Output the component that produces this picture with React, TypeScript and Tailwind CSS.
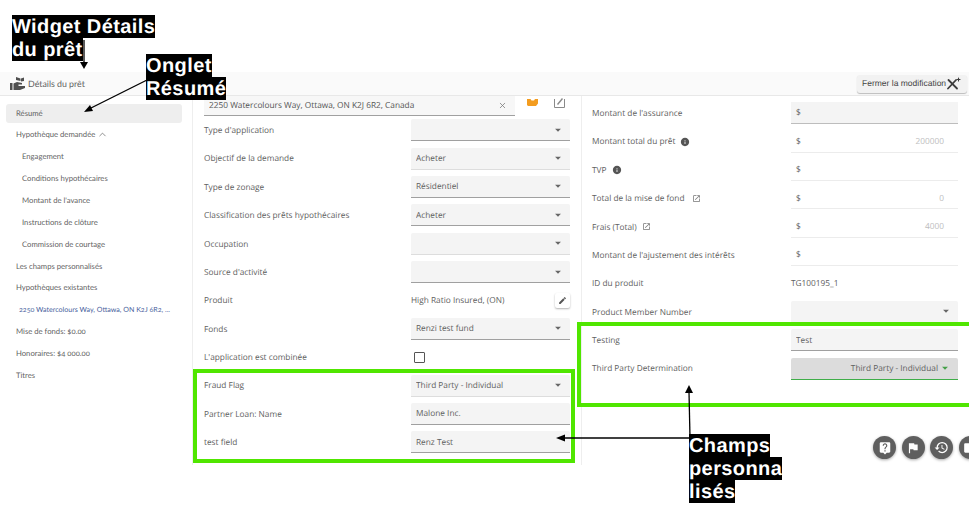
import React from 'react';
import { ChevronUp, X } from 'lucide-react';
import { MdArrowDropDown, MdEdit, MdFlag, MdHistory, MdInfo, MdLiveHelp, MdNote, MdOpenInNew } from 'react-icons/md';

type FieldKind = 'select' | 'text' | 'money' | 'plain';

// Grey filled input, with the caret when it is a select
const Field: React.FC<{ value?: string; kind?: FieldKind; faded?: boolean; width: string }> = ({ value, kind = 'text', faded, width }) => (
  <div
    className={`${width} h-[22px] shrink-0 flex items-center pl-[5px] pr-[6px] text-[8.3px] text-[#616161] rounded-t-[2px] bg-[#f4f4f4] border-b ${
      faded ? 'border-[#dddddd]' : 'border-[#a0a0a0]'
    }`}
  >
    <span className="flex-1 truncate pt-[2px]">{value}</span>
    {kind === 'select' && <MdArrowDropDown size={14} className="text-[#666666] -mr-[1px]" />}
  </div>
);

// Read-only money cell: no fill, faint underline, grey amount on the right
const Money: React.FC<{ value?: string; filled?: boolean }> = ({ value, filled }) => (
  <div
    className={`w-[167px] h-[22px] flex items-center pl-[5px] pr-[14px] text-[8.3px] border-b ${
      filled ? 'bg-[#f4f4f4] border-[#bdbdbd]' : 'border-[#ececec]'
    }`}
  >
    <span className="flex-1 text-[#616161] pt-[2px]">$</span>
    <span className="text-[#bdbdbd] pt-[2px]">{value}</span>
  </div>
);

const Row: React.FC<{ label: React.ReactNode; labelWidth: string; children?: React.ReactNode }> = ({ label, labelWidth, children }) => (
  <div className="flex items-center h-[28.4px]">
    <div className={`${labelWidth} shrink-0 flex items-center pt-[2px] text-[8.3px] text-[#616161]`}>{label}</div>
    {children}
  </div>
);

const NavItem: React.FC<{ children: React.ReactNode; sub?: boolean }> = ({ children, sub }) => (
  <div className={`h-[21.9px] flex items-center pt-[2px] text-[7.7px] text-[#5f5f5f] oldstyle-nums ${sub ? 'pl-[22px]' : 'pl-[16px]'}`}>{children}</div>
);

const Fab: React.FC<{ children: React.ReactNode }> = ({ children }) => (
  <div className="w-[23px] h-[23px] shrink-0 rounded-full bg-[#5f5f5f] shadow-[0_1px_3px_rgba(0,0,0,0.35)] flex items-center justify-center text-white">
    {children}
  </div>
);

const Tag: React.FC<{ children: React.ReactNode }> = ({ children }) => (
  <span className="block w-fit bg-black text-white font-bold text-[20px] pt-[1px] leading-[22px] tracking-[0.4px] font-['Liberation_Sans',sans-serif]">{children}</span>
);

const col1 = 'w-[207px]';
const in1 = 'w-[159px]';
const col2 = 'w-[199px]';
const in2 = 'w-[167px]';

export default function App() {
  return (
    <div className="relative w-[969px] h-[510px] overflow-hidden bg-white font-['Open_Sans',sans-serif] [text-rendering:geometricPrecision]">
      <div className="h-[72px]" />

      {/* top bar */}
      <div className="h-[24px] flex items-center justify-between bg-[#fafafa] border-b border-[#e8e8e8] pl-[10px] pr-[2px]">
        <div className="flex items-center gap-[3px] text-[8.8px] text-[#5f5f5f] font-['Lato',sans-serif]">
          <svg width="15" height="13" viewBox="0 0 15 13" fill="#4f4f4f">
            <path d="M0 6h2.5v7H0z" />
            <path d="M3.5 6.5 7 5l5 1v1.5H8.5V9H15v2l-5 2H3.5z" />
            <path d="M6 0l4.5 1.5V4L6 3zM11 1.5l3-1V4l-3 .5z" />
          </svg>
          <span>Détails du prêt</span>
        </div>
        <div className="w-[110px] h-[18px] flex items-center pl-[5px] gap-[1px] rounded-[3px] bg-[#f2f2f2] shadow-[0_1px_1px_rgba(0,0,0,0.25)] text-[8.5px] text-[#444444] font-['Liberation_Sans',sans-serif]">
          <span>Fermer la modification</span>
          <svg width="14" height="13" viewBox="0 0 14 13" fill="none" stroke="#3d3d3d" strokeWidth="1.8" strokeLinecap="round">
            <path d="M1 11.5 9 3" />
            <path d="M1.5 3 10 11.5" />
            <path d="M11.5 1v3M10 2.5h3" strokeWidth="1.1" />
          </svg>
        </div>
      </div>

      <div className="flex">
        {/* sidebar */}
        <nav className="w-[192px] shrink-0 pt-[8px] pl-[6px] pr-[10px] font-['Lato',sans-serif]">
          <div className="h-[19px] flex items-center pl-[10px] rounded-[3px] bg-[#eeeeee] text-[7.7px] text-[#5f5f5f]">Résumé</div>
          <div className="-ml-[6px]">
            <NavItem>
              Hypothèque demandée
              <ChevronUp size={11} strokeWidth={1.5} className="ml-[2px]" />
            </NavItem>
            <NavItem sub>Engagement</NavItem>
            <NavItem sub>Conditions hypothécaires</NavItem>
            <NavItem sub>Montant de l'avance</NavItem>
            <NavItem sub>Instructions de clôture</NavItem>
            <NavItem sub>Commission de courtage</NavItem>
            <NavItem>Les champs personnalisés</NavItem>
            <NavItem>Hypothèques existantes</NavItem>
            <div className="h-[21.9px] flex items-center pt-[2px] pl-[19px] text-[7.1px] text-[#4a5f9e] oldstyle-nums">2250 Watercolours Way, Ottawa, ON K2J 6R2, ...</div>
            <NavItem>Mise de fonds: $0.00</NavItem>
            <NavItem>Honoraires: $4 000.00</NavItem>
            <NavItem>Titres</NavItem>
          </div>
        </nav>

        {/* first form column */}
        <section className="w-[389px] h-[369px] shrink-0 border-l border-[#eeeeee] pl-[11px]">
          <div className="h-[20px] flex items-start overflow-hidden">
            <div className="w-[311px] h-[19.5px] flex items-center pl-[5px] pr-[8px] bg-[#f7f7f7] border-b border-[#a0a0a0] text-[8.3px] text-[#555555]">
              <span className="flex-1 truncate pt-[2px]">2250 Watercolours Way, Ottawa, ON K2J 6R2, Canada</span>
              <X size={9} className="text-[#777777]" />
            </div>
            <svg width="11" height="8" viewBox="0 0 11 8" fill="#f39c1f" className="ml-[12px] mt-[3px] shrink-0">
              <path d="M0 0h3.5l1 1.5h2.5L8 0h3v4.5L9 7H1L0 6z" />
            </svg>
            <svg width="11" height="11" viewBox="0 0 11 11" fill="none" stroke="#8a8a8a" strokeWidth="1" className="ml-[16px] mt-[1px] shrink-0">
              <path d="M.5 2v8.5h10V2" />
              <path d="M3.5 7.5 8.5 1.5" strokeWidth="1.4" />
            </svg>
          </div>
          <Row label="Type d'application" labelWidth={col1}><Field kind="select" width={in1} /></Row>
          <Row label="Objectif de la demande" labelWidth={col1}><Field kind="select" value="Acheter" faded width={in1} /></Row>
          <Row label="Type de zonage" labelWidth={col1}><Field kind="select" value="Résidentiel" width={in1} /></Row>
          <Row label="Classification des prêts hypothécaires" labelWidth={col1}><Field kind="select" value="Acheter" width={in1} /></Row>
          <Row label="Occupation" labelWidth={col1}><Field kind="select" faded width={in1} /></Row>
          <Row label="Source d'activité" labelWidth={col1}><Field kind="select" width={in1} /></Row>
          <Row label="Produit" labelWidth={col1}>
            <div className={`${in1} flex items-center justify-between text-[8.3px] text-[#616161]`}>
              <span className="pt-[2px]">High Ratio Insured, (ON)</span>
              <span className="w-[15px] h-[15px] flex items-center justify-center rounded-[2px] bg-white shadow-[0_1px_2px_rgba(0,0,0,0.3)]">
                <MdEdit size={9} className="text-[#555555]" />
              </span>
            </div>
          </Row>
          <Row label="Fonds" labelWidth={col1}><Field kind="select" value="Renzi test fund" width={in1} /></Row>
          <Row label="L'application est combinée" labelWidth={col1}>
            <span className="ml-[3px] w-[11px] h-[11px] rounded-[1px] border border-[#555555]" />
          </Row>
          <Row label="Fraud Flag" labelWidth={col1}><Field kind="select" value="Third Party - Individual" faded width={in1} /></Row>
          <Row label="Partner Loan: Name" labelWidth={col1}><Field value="Malone Inc." width={in1} /></Row>
          <Row label="test field" labelWidth={col1}><Field value="Renz Test" width={in1} /></Row>
        </section>

        {/* second form column */}
        <section className="w-[388px] h-[369px] border-l border-[#eeeeee] pl-[10px] pt-[3px]">
          <Row label="Montant de l'assurance" labelWidth={col2}><Money filled /></Row>
          <Row
            labelWidth={col2}
            label={<>Montant total du prêt<MdInfo size={10} className="ml-[5px] -mt-[2px] text-[#555555]" /></>}
          >
            <Money value="200000" />
          </Row>
          <Row labelWidth={col2} label={<>TVP<MdInfo size={10} className="ml-[5px] -mt-[2px] text-[#555555]" /></>}><Money /></Row>
          <Row
            labelWidth={col2}
            label={<>Total de la mise de fond<MdOpenInNew size={9} className="ml-[7px] -mt-[2px] text-[#777777]" /></>}
          >
            <Money value="0" />
          </Row>
          <Row labelWidth={col2} label={<>Frais (Total)<MdOpenInNew size={9} className="ml-[5px] -mt-[2px] text-[#777777]" /></>}><Money value="4000" /></Row>
          <Row label="Montant de l'ajustement des intérêts" labelWidth={col2}><Money /></Row>
          <Row label="ID du produit" labelWidth={col2}><span className="text-[8.3px] text-[#616161] pt-[2px]">TG100195_1</span></Row>
          <Row label="Product Member Number" labelWidth={col2}><Field kind="select" faded width={in2} /></Row>
          <Row label="Testing" labelWidth={col2}><Field value="Test" width={in2} /></Row>
          <Row label="Third Party Determination" labelWidth={col2}>
            <div className={`${in2} h-[22px] flex items-center justify-end pr-[6px] rounded-t-[2px] bg-[#dcdcdc] border-b border-[#3fae49] text-[8.3px] text-[#616161]`}>
              <span className="pt-[2px]">Third Party - Individual</span>
              <MdArrowDropDown size={14} className="text-[#43a047]" />
            </div>
          </Row>
        </section>
      </div>

      {/* floating action buttons */}
      <div className="absolute left-[873px] top-[436px] flex gap-[5.5px]">
        <Fab><MdLiveHelp size={14} /></Fab>
        <Fab><MdFlag size={14} /></Fab>
        <Fab><MdHistory size={15} /></Fab>
        <Fab><MdNote size={14} /></Fab>
      </div>

      {/* green highlight frames */}
      <div className="absolute left-[193px] top-[369px] w-[382px] h-[94px] border-[4px] border-[#50e600]" />
      <div className="absolute left-[577px] top-[322px] w-[392px] h-[85px] border-[4px] border-r-0 border-[#50e600]" />

      {/* annotation arrows */}
      <svg className="absolute inset-0" width="969" height="510" fill="none" stroke="#000000" strokeWidth="1.3">
        <path d="M84 40V63" />
        <path d="M80 62h8l-4 7z" fill="#000000" stroke="none" />
        <path d="M147 80 91 108" />
        <path d="M84 112l9-1-3-6z" fill="#000000" stroke="none" />
        <path d="M690 438H563" />
        <path d="M556 438l9-3.5v7z" fill="#000000" stroke="none" />
        <path d="M690 438 689 392" />
        <path d="M689 385l-4 8h8z" fill="#000000" stroke="none" />
      </svg>

      {/* annotation labels */}
      <div className="absolute left-[12px] top-[15px]">
        <Tag>Widget Détails</Tag>
        <Tag>du prêt</Tag>
      </div>
      <div className="absolute left-[146px] top-[54px]">
        <Tag>Onglet</Tag>
        <Tag>Résumé</Tag>
      </div>
      <div className="absolute left-[689px] top-[434px]">
        <Tag>Champs</Tag>
        <Tag>personna</Tag>
        <Tag>lisés</Tag>
      </div>
    </div>
  );
}
